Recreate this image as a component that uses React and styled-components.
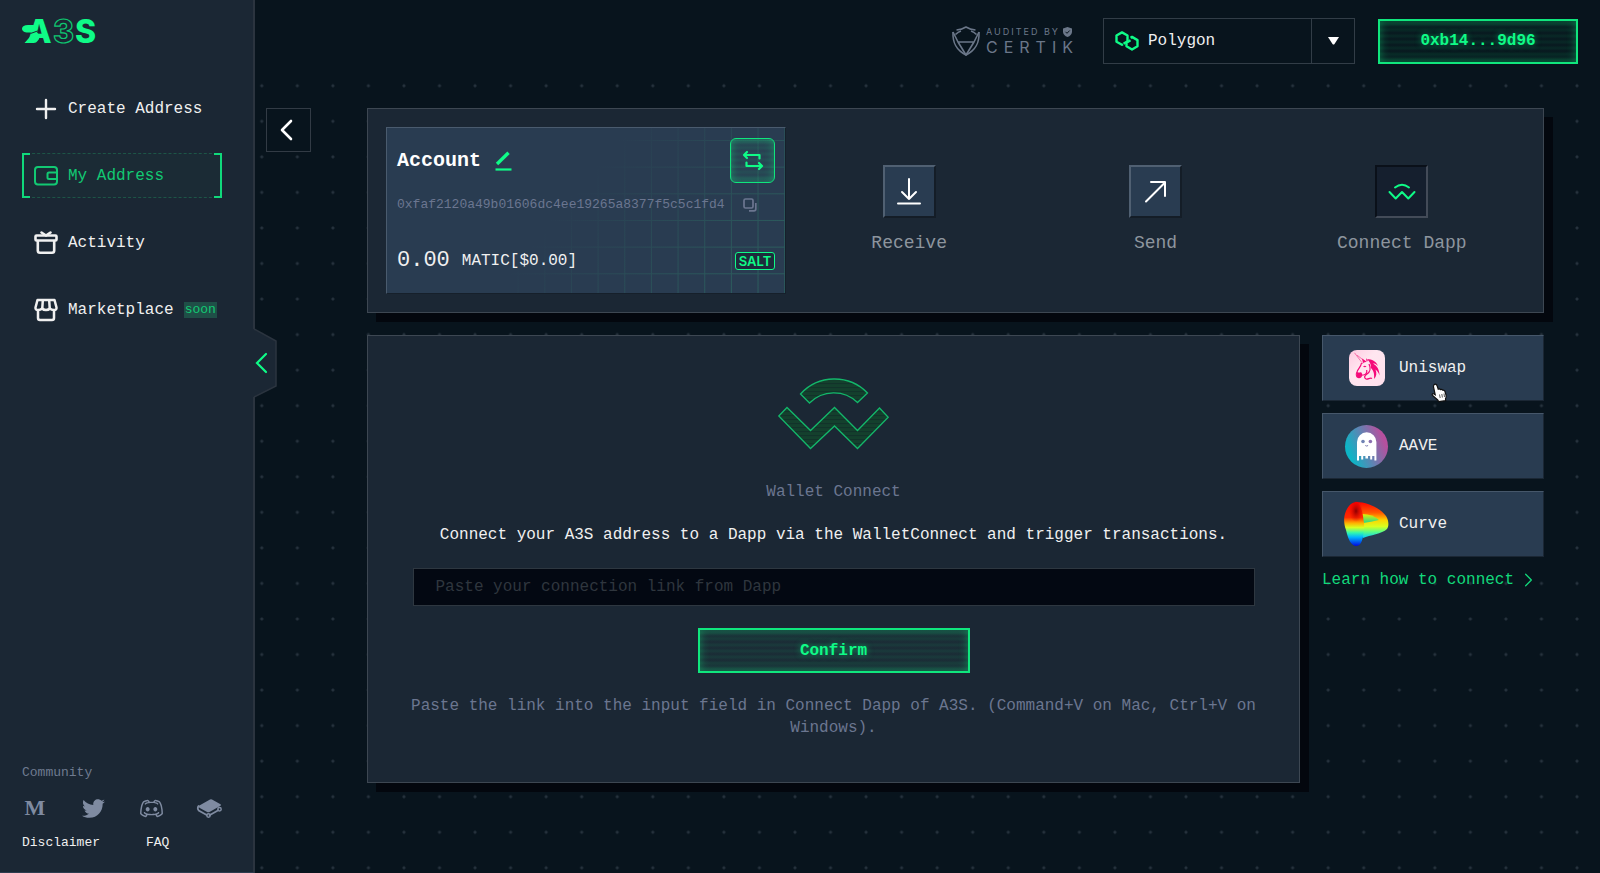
import React, { useState } from "react";
import styled, { createGlobalStyle, css } from "styled-components";
import { FaTwitter } from "react-icons/fa";
import { RxDiscordLogo } from "react-icons/rx";

const GlobalStyle = createGlobalStyle`
  * {
    box-sizing: border-box;
  }
  body {
    margin: 0;
    background-color: #08141d;
    color: #f0f0f0;
    font-family: "Liberation Mono", "Courier New", monospace;
    font-size: 16px;
    line-height: 22px;
  }
  a {
    color: inherit;
    text-decoration: none;
  }
  button,
  input,
  select {
    font: inherit;
  }
  svg {
    display: block;
    flex: none;
    overflow: visible;
  }
`;

const PlusIcon = () => (
  <svg width="24" height="24" viewBox="0 0 24 24" fill="none" stroke="currentColor" strokeWidth="2.4" strokeLinecap="round">
    <path d="M12 3v18M3 12h18" />
  </svg>
);

const WalletIcon = () => (
  <svg width="24" height="24" viewBox="0 0 24 24" fill="none" stroke="currentColor" strokeWidth="2">
    <rect x="1" y="3" width="22" height="17.5" rx="3" />
    <path d="M23 8.500h-8q-1.500 0-1.500 1.500v3.500q0 1.500 1.500 1.500h8" />
  </svg>
);

const GiftIcon = () => (
  <svg width="24" height="24" viewBox="0 0 24 24" fill="none" stroke="currentColor" strokeWidth="2.600" strokeLinecap="round" strokeLinejoin="round">
    <rect x="1.500" y="4.500" width="21" height="5" rx="1" />
    <path d="M3.800 10v9.500q0 2.200 2.200 2.200h12q2.200 0 2.200-2.200V10M7.500 1.500l4.500 3 4.500-3" />
  </svg>
);

const StoreIcon = () => (
  <svg width="24" height="24" viewBox="0 0 24 24" fill="none" stroke="currentColor" strokeWidth="2.500" strokeLinecap="round" strokeLinejoin="round">
    <path d="M3.500 2h17l2 7.500q.3 2.500-2.500 2.500t-4-1.500q-1.600 1.500-4 1.500t-4-1.500Q6.800 12 4 12T1.500 9.500z" />
    <path d="M8.800 2.500L8.300 10M15.200 2.500l.5 7.500" />
    <path d="M4 12.500V20q0 2 2 2h12q2 0 2-2v-7.500" />
  </svg>
);

const GitBookIcon = () => (
  <svg width="25" height="19" viewBox="0 0 25 19">
    <path d="M1.500 7L13 .5q1-.5 2 0l8.500 4.700q1 .8 0 1.500L12.500 13q-1.200.6-2.400 0L2.800 9q-1.500-.8-1.300-2z" fill="currentColor" />
    <path
      d="M1.500 7q-1.600 2.200.2 4.500l8 4.500M12.500 16.200l8.800-5"
      fill="none"
      stroke="currentColor"
      strokeWidth="1.700"
      strokeLinecap="round"
    />
    <circle cx="11.500" cy="16.500" r="1.700" fill="none" stroke="currentColor" strokeWidth="1.500" />
    <circle cx="22.500" cy="10.300" r="1.700" fill="none" stroke="currentColor" strokeWidth="1.500" />
  </svg>
);

const Chevron = ({ width = 13, height = 22, flip, stroke = 2.6 }) => (
  <svg width={width} height={height} viewBox="0 0 13 22" fill="none" stroke="currentColor" strokeWidth={stroke} strokeLinecap="round" strokeLinejoin="round">
    <path d={flip ? "M2 2l9 9-9 9" : "M11 2l-9 9 9 9"} />
  </svg>
);

const BrandLogo = () => (
  <svg width="76" height="26" viewBox="0 0 76 26" role="img" aria-label="A3S">
    <g fontFamily="Inter, sans-serif" fontWeight="800" fontSize="32">
      <text x="5" y="24" fill="#0ffb87">A</text>
      <text x="31" y="24" fill="#1b2734" stroke="#0ec771" strokeWidth="1.200">3</text>
      <text x="53" y="24" fill="#0ffb87">S</text>
    </g>
    <path d="M6 6h10l-1 5-6 2.500H4.500C-2 12.500-1.500 6 6 6z" fill="#0ffb87" />
    <path d="M10 15.500q4-4 6.500-.5t-1 7q-1 2-4 2H2.500z" fill="#0ffb87" />
    <path d="M8.500 14.500l7-2.500" stroke="#1b2734" strokeWidth="1" />
  </svg>
);

const CertikShield = () => (
  <svg width="28" height="30" viewBox="0 0 28 30" fill="none" stroke="currentColor" strokeWidth="1.600" strokeLinejoin="round">
    <path d="M4.500 4Q10 3.500 14 1q4 2.500 9.500 3M1 6C.5 17 4 24 14 29 24 24 27.500 17 27 6" />
    <path d="M1 6l5 10 8 13 8-13 5-10M6 16h16M3.500 8.500Q6 6 9 5M24.500 8.500Q22 6 19 5" />
  </svg>
);

const PolygonIcon = () => (
  <svg width="24" height="20" viewBox="0 0 24 20" fill="none" stroke="#0ffb87" strokeWidth="2.400" strokeLinejoin="round">
    <path d="M8 13.200l-1 .6-5.500-3.100V4.500L7 1.400l5.500 3.100v2.300M12.500 6.800v3.500L8.500 12.700" />
    <path d="M15.500 6.700l1.500-.8 5.500 3.200v6.200L17 18.500l-5.500-3.200v-3.600l4-2.400" />
  </svg>
);

const EditIcon = () => (
  <svg width="17" height="20" viewBox="0 0 17 20" fill="none" stroke="#0ffb87">
    <path d="M2 13L13.500 1.800" strokeWidth="3.400" strokeLinejoin="round" />
    <path d="M.5 18.500h16" strokeWidth="2.200" />
  </svg>
);

const SwapIcon = () => (
  <svg width="22" height="22" viewBox="0 0 22 22" fill="none" stroke="currentColor" strokeWidth="2.200" strokeLinecap="round" strokeLinejoin="round">
    <path d="M5 2L2 5l3 3M2.500 5H17.500v3.500" />
    <path d="M17 13l3 3-3 3M19.500 16H4.500v-3.500" />
  </svg>
);

const CopyIcon = () => (
  <svg width="14" height="14" viewBox="0 0 14 14" fill="none" stroke="currentColor" strokeWidth="1.700" strokeLinejoin="round">
    <rect x="1" y="1" width="9" height="9" rx="1.500" />
    <path d="M12.800 5v6q0 1.800-1.800 1.800H6" />
  </svg>
);

const ReceiveIcon = () => (
  <svg width="26" height="28" viewBox="0 0 26 28" fill="none" stroke="currentColor" strokeWidth="2" strokeLinecap="round" strokeLinejoin="round">
    <path d="M13 1v20M6 14l7 7 7-7M2 25.500h22" />
  </svg>
);

const SendIcon = () => (
  <svg width="26" height="28" viewBox="0 0 26 28" fill="none" stroke="currentColor" strokeWidth="2" strokeLinecap="round" strokeLinejoin="round">
    <path d="M4 23.500L23 4.500M9 4h14v14" />
  </svg>
);

const ConnectIcon = () => (
  <svg width="28" height="28" viewBox="0 0 28 28" fill="none" stroke="#0ffb87" strokeWidth="2" strokeLinecap="round" strokeLinejoin="round">
    <path d="M7 9.500q7-5.500 14 0M1.500 14l6.200 6.500L14 14l6.300 6.500L26.500 14" />
  </svg>
);

const WalletConnectMark = () => (
  <svg width="111" height="71" viewBox="0 0 111 71">
    <defs>
      <pattern id="scan" width="4" height="4" patternUnits="userSpaceOnUse">
        <rect width="4" height="4" fill="#14402d" />
        <rect width="4" height="1.200" fill="#12332a" />
      </pattern>
    </defs>
    <g fill="url(#scan)" stroke="#13b76a" strokeWidth="1.300">
      <path d="M22.500 15A46 46 0 0 1 89.500 14L79.500 23.500A34 34 0 0 0 31.500 24z" />
      <path d="M.8 37L9 28.500l23.500 23L56.500 28.500l23 23L101.500 29l8.700 9.300L79.500 69.500 56.500 47l-24 22.500z" />
    </g>
  </svg>
);

const UniswapLogo = () => (
  <svg width="36" height="36" viewBox="0 0 36 36">
    <defs>
      <linearGradient id="uni" x1="0" y1="0" x2="1" y2="1">
        <stop offset="0" stopColor="#ffc9e0" />
        <stop offset="0.400" stopColor="#ffe6f0" />
        <stop offset="1" stopColor="#ffe0ec" />
      </linearGradient>
    </defs>
    <rect width="36" height="36" rx="8" fill="url(#uni)" />
    <path d="M5.500 2.800L14 14M8 5.200L17 12" stroke="#f5458f" strokeWidth="0.700" />
    <path d="M13 8.500l4.500 3-3.500 1.500zM17 8l2 3-1.500.5z" fill="#f50b7a" />
    <path d="M12.500 13C12 17 9 18.500 8 22c-1 1.500-.8 4 .2 5 1.500 1 3 .5 4-.5-.5-1 0-1.500 2-1.500 3-.2 4-2.500 3.500-5" fill="none" stroke="#f50b7a" strokeWidth="1.200" />
    <path d="M8 22c1.500.5 3 1 4 0l1.500 2.500-2 2.500c-2.500 1-4 0-4-2.500z" fill="#f50b7a" />
    <path d="M14 16.500q1.800-1.500 3.500 0-1.500 1.600-3.500 0z" fill="#f50b7a" />
    <path d="M18 9c5 .3 9 2 11 7-2-2-3-2.500-5-2.500 4 2.200 6.500 6 6.500 12-1-3-2-4.500-4-6 1.500 4 1 7-1.500 9.500.5-5-.2-8-3-11 .2-4-1.500-6.500-4-9z" fill="#f50b7a" />
    <path d="M20 14c2 4 1 8-2 10s-3 4-1 5 4-2 6-.5" fill="none" stroke="#f50b7a" strokeWidth="1.300" />
  </svg>
);

const AaveLogo = () => (
  <svg width="43" height="43" viewBox="0 0 43 43">
    <defs>
      <linearGradient id="aave" x1="0" y1="0.700" x2="1" y2="0.300">
        <stop offset="0.100" stopColor="#0db5c6" />
        <stop offset="0.900" stopColor="#b6509e" />
      </linearGradient>
    </defs>
    <circle cx="21.500" cy="21.500" r="21.500" fill="url(#aave)" />
    <path d="M12 35.500V17a9.700 9.700 0 0 1 19.400 0v18.500h-2V31h-2.200v3.500h-2V31H23v2.500h-2.600V31h-2.200v3.500h-2V31H14v4.500z" fill="#fff" />
    <circle cx="18" cy="16.500" r="1.800" fill="#7083b4" />
    <circle cx="25.400" cy="16.500" r="1.800" fill="#8a70b0" />
    <path d="M20.300 20.500q1.400 1.100 2.800 0" fill="none" stroke="#7a78b0" />
  </svg>
);

const CurveLogo = () => (
  <svg width="45" height="44" viewBox="0 0 45 44">
    <defs>
      <linearGradient id="curveLeft" x1="0" y1="0" x2="0" y2="1">
        <stop offset="0" stopColor="#f00" />
        <stop offset="0.350" stopColor="#ff2a00" />
        <stop offset="0.480" stopColor="#ffb000" />
        <stop offset="0.580" stopColor="#d8ff20" />
        <stop offset="0.700" stopColor="#30f8b0" />
        <stop offset="0.800" stopColor="#00b4ff" />
        <stop offset="1" stopColor="#0008e0" />
      </linearGradient>
      <linearGradient id="curveRight" x1="0" y1="0" x2="0" y2="1">
        <stop offset="0" stopColor="#f00" />
        <stop offset="0.300" stopColor="#ff5a00" />
        <stop offset="0.500" stopColor="#ffd400" />
        <stop offset="0.680" stopColor="#d8ff20" />
        <stop offset="0.820" stopColor="#60ff80" />
        <stop offset="1" stopColor="#00d0ff" />
      </linearGradient>
      <linearGradient id="curveHole" x1="0" y1="0" x2="0" y2="1">
        <stop offset="0" stopColor="#e8f000" />
        <stop offset="1" stopColor="#1fd890" />
      </linearGradient>
      <radialGradient id="curveDark">
        <stop offset="0" stopColor="#8a0000" />
        <stop offset="1" stopColor="#e00000" stopOpacity="0" />
      </radialGradient>
    </defs>
    <path d="M12 0C24 0 37 7 42 14c3 5 3 10 1 13-5 5-17 6-24 9L12 20z" fill="url(#curveRight)" />
    <path d="M18 12q11 0 17 6-8 2-16 3z" fill="url(#curveHole)" />
    <path d="M2 9C5 2 9 0 13 0c4 3 6 12 6.500 18 1 3 .5 7 .5 10-1 7-2 16-7.500 16S4 37 2 28C-.5 21-.5 15 2 9z" fill="url(#curveLeft)" />
    <ellipse cx="12" cy="9" rx="7" ry="11" fill="url(#curveDark)" />
  </svg>
);

const HandPointer = () => (
  <svg width="17" height="19" viewBox="0 0 17 19">
    <path
      d="M3 1.800C4.500.5 5.800 1.500 6.200 3l1 3.200q1.500-.8 2.300.4 1.500-.6 2.200.6 1.700-.3 2.200 1.100l1.200 4q.3 2-.6 3.500l.2 1.900-7 .8-1-1.500-4.800-4.300C.3 11.500 1.500 10 3 11l1.200.8L2.500 4Q2.300 2.500 3 1.800z"
      fill="#fff"
      stroke="#101010"
      strokeWidth="1.200"
    />
    <path d="M8.500 11.500l.7 3.500M10.800 11l.6 3.500M13 10.500l.5 3.500" stroke="#333" strokeWidth="0.800" />
  </svg>
);

const navItems = [
  { label: "Create Address", icon: <PlusIcon /> },
  { label: "My Address", icon: <WalletIcon />, active: true },
  { label: "Activity", icon: <GiftIcon /> },
  { label: "Marketplace", icon: <StoreIcon />, soon: true },
];

const actions = [
  { label: "Receive", icon: <ReceiveIcon /> },
  { label: "Send", icon: <SendIcon /> },
  { label: "Connect Dapp", icon: <ConnectIcon />, pressed: true },
];

const dapps = [
  { label: "Uniswap", icon: <UniswapLogo />, hovered: true },
  { label: "AAVE", icon: <AaveLogo /> },
  { label: "Curve", icon: <CurveLogo /> },
];

const SideBar = () => (
  <Aside>
    <a href="#home">
      <BrandLogo />
    </a>
    <Nav>
      {navItems.map(({ label, icon, active, soon }) => (
        <NavItem key={label} href="#" $active={active}>
          {icon}
          <span>{label}</span>
          {soon && <Soon>soon</Soon>}
        </NavItem>
      ))}
    </Nav>
    <Community>
      <CommunityTitle>Community</CommunityTitle>
      <Socials>
        <Social href="#" aria-label="Medium">
          <MediumMark>M</MediumMark>
        </Social>
        <Social href="#" aria-label="Twitter">
          <FaTwitter size={23} />
        </Social>
        <Social href="#" aria-label="Discord">
          <RxDiscordLogo size={23} />
        </Social>
        <Social href="#" aria-label="GitBook">
          <GitBookIcon />
        </Social>
      </Socials>
      <Legal>
        <a href="#disclaimer">Disclaimer</a>
        <a href="#faq">FAQ</a>
      </Legal>
    </Community>
    <Collapse aria-label="Collapse menu">
      <svg width="25" height="70" viewBox="0 0 25 70">
        <path d="M0 1h1l22 12v45L1 69H0z" fill="#1b2734" />
        <path d="M1 1l22 12v45L1 69" fill="none" stroke="#2b343f" strokeWidth="1.500" />
        <path d="M13 26l-9 9 9 9" fill="none" stroke="#0ffb87" strokeWidth="2.200" strokeLinecap="round" />
      </svg>
    </Collapse>
  </Aside>
);

const TopBar = () => (
  <Header>
    <Certik>
      <CertikShield />
      <div>
        <Audited>
          AUDITED BY
          <svg width="9" height="10" viewBox="0 0 9 10">
            <path d="M4.500 0L9 1.500V5Q8.500 8.500 4.500 10 .5 8.500 0 5V1.500z" fill="currentColor" />
            <path d="M2.500 4.800l1.500 1.500 2.700-2.800" fill="none" stroke="#08141d" />
          </svg>
        </Audited>
        <CertikName>CERTIK</CertikName>
      </div>
    </Certik>
    <Network>
      <PolygonIcon />
      <NetworkSelect aria-label="Network" defaultValue="Polygon">
        <option>Polygon</option>
      </NetworkSelect>
      <Caret>
        <svg width="11" height="8" viewBox="0 0 11 8">
          <path d="M0 0h11L6.500 7q-1 1-2 0z" fill="#fff" />
        </svg>
      </Caret>
    </Network>
    <AccountButton>0xb14...9d96</AccountButton>
  </Header>
);

const App = () => {
  const [link, setLink] = useState("");

  return (
    <>
      <GlobalStyle />
      <Page>
        <SideBar />
        <Main>
          <TopBar />
          <Content>
            <BackButton aria-label="Back">
              <Chevron />
            </BackButton>
            <Panels>
              <AccountPanel>
                <AccountCard>
                  <CardTop>
                    <h1>Account</h1>
                    <IconButton aria-label="Rename">
                      <EditIcon />
                    </IconButton>
                    <SwapButton aria-label="Switch account">
                      <SwapIcon />
                    </SwapButton>
                  </CardTop>
                  <AddressRow>
                    <span>0xfaf2120a49b01606dc4ee19265a8377f5c5c1fd4</span>
                    <IconButton aria-label="Copy address">
                      <CopyIcon />
                    </IconButton>
                  </AddressRow>
                  <Balance>
                    <Amount>0.00</Amount>
                    <span>MATIC[$0.00]</span>
                    <Salt>SALT</Salt>
                  </Balance>
                </AccountCard>
                <Actions>
                  {actions.map(({ label, icon, pressed }) => (
                    <Action key={label}>
                      <Tile $pressed={pressed}>{icon}</Tile>
                      {label}
                    </Action>
                  ))}
                </Actions>
              </AccountPanel>
              <Columns>
                <ConnectPanel>
                  <WalletConnectMark />
                  <PanelTitle>Wallet Connect</PanelTitle>
                  <Lead>Connect your A3S address to a Dapp via the WalletConnect and trigger transactions.</Lead>
                  <LinkInput
                    aria-label="Connection link"
                    placeholder="Paste your connection link from Dapp"
                    value={link}
                    onChange={(e) => setLink(e.target.value)}
                  />
                  <ConfirmButton>Confirm</ConfirmButton>
                  <Hint>
                    Paste the link into the input field in Connect Dapp of A3S. (Command+V on Mac, Ctrl+V on Windows).
                  </Hint>
                </ConnectPanel>
                <DappList>
                  {dapps.map(({ label, icon, hovered }) => (
                    <DappCard key={label} href="#">
                      <DappIcon>{icon}</DappIcon>
                      {label}
                      {hovered && (
                        <Pointer>
                          <HandPointer />
                        </Pointer>
                      )}
                    </DappCard>
                  ))}
                  <LearnLink href="#learn">
                    Learn how to connect
                    <Chevron width={9} height={14} stroke={2} flip />
                  </LearnLink>
                </DappList>
              </Columns>
            </Panels>
          </Content>
        </Main>
      </Page>
    </>
  );
};

const Page = styled.div`
  display: flex;
  min-height: 100vh;
`;

const Aside = styled.aside`
  position: relative;
  display: flex;
  flex-direction: column;
  flex: none;
  width: 255px;
  padding: 19px 31px 18px 22px;
  background-color: #1b2734;
  border-right: 2px solid #2b343f;
  border-bottom: 1px solid #2d3c4f;
`;

const Nav = styled.nav`
  display: flex;
  flex-direction: column;
  gap: 22px;
  margin-top: 41px;
`;

const NavItem = styled.a`
  position: relative;
  display: flex;
  align-items: center;
  gap: 10px;
  height: 45px;
  padding-left: 12px;

  ${({ $active }) =>
    $active &&
    css`
      color: #12c973;
      background-color: #1b2b35;
      border-top: 1px dashed #1d5547;
      border-bottom: 1px dashed #1d5547;

      &::before,
      &::after {
        content: "";
        position: absolute;
        top: -1px;
        bottom: -1px;
        width: 6px;
        border: 2px solid #10d97b;
      }
      &::before {
        left: 0;
        border-right: none;
      }
      &::after {
        right: 0;
        border-left: none;
      }
    `}
`;

const Soon = styled.span`
  padding: 0 1px;
  font-size: 13px;
  line-height: 16px;
  color: #12c973;
  background-color: #1f4f47;
`;

const Community = styled.div`
  margin-top: auto;
  font-size: 13px;
`;

const CommunityTitle = styled.div`
  color: #6f7b90;
`;

const Socials = styled.div`
  display: flex;
  gap: 32px;
  margin: 12px 0;
  color: #7f8ba1;
`;

const Social = styled.a`
  display: flex;
  align-items: center;
  justify-content: center;
  width: 26px;
  height: 24px;
`;

const MediumMark = styled.span`
  font-family: "Liberation Serif", serif;
  font-size: 22px;
  font-weight: 700;
`;

const Legal = styled.div`
  display: flex;
  gap: 46px;
`;

const Collapse = styled.button`
  position: absolute;
  top: 328px;
  left: 253px;
  padding: 0;
  background: none;
  border: none;
  cursor: pointer;
`;

const Main = styled.main`
  flex: 1;
  min-width: 0;
  background-image: radial-gradient(circle, #26323d 1px, transparent 2px);
  background-size: calc(100vw / 45) calc(100vw / 45);
  background-position: -11px 68px;
`;

const Header = styled.header`
  display: flex;
  align-items: center;
  justify-content: flex-end;
  height: 82px;
  padding-right: 22px;
  background-color: #08141d;
`;

const Certik = styled.div`
  display: flex;
  align-items: center;
  gap: 6px;
  margin-right: 24px;
  color: #6b7789;
  font-family: Inter, sans-serif;
`;

const Audited = styled.div`
  display: flex;
  align-items: center;
  gap: 3px;
  font-size: 9px;
  line-height: 12px;
  letter-spacing: 2px;
`;

const CertikName = styled.div`
  font-size: 16px;
  font-weight: 400;
  line-height: 18px;
  letter-spacing: 6px;
`;

const Network = styled.div`
  position: relative;
  display: flex;
  align-items: center;
  width: 252px;
  height: 46px;
  margin-right: 23px;
  padding-left: 11px;
  border: 1px solid #323d47;
`;

const NetworkSelect = styled.select`
  flex: 1;
  height: 44px;
  padding: 0 9px;
  color: #f0f0f0;
  background: none;
  border: none;
  appearance: none;
`;

const Caret = styled.span`
  display: flex;
  align-items: center;
  justify-content: center;
  width: 43px;
  height: 44px;
  border-left: 1px solid #323d47;
  pointer-events: none;
`;

const neon = css`
  color: #0ffb87;
  background: repeating-linear-gradient(
    rgba(15, 251, 135, 0.02) 0,
    rgba(15, 251, 135, 0.09) 3px,
    rgba(15, 251, 135, 0.02) 6px
  );
  box-shadow: inset 0 0 10px rgba(15, 251, 135, 0.4);
  cursor: pointer;
`;

const NeonButton = styled.button`
  ${neon}
  height: 45px;
  padding: 0;
  font-weight: 700;
  text-shadow: 0 0 6px rgba(15, 251, 135, 0.5);
  border: 2px solid #10e67d;
`;

const AccountButton = styled(NeonButton)`
  width: 200px;
`;

const ConfirmButton = styled(NeonButton)`
  width: 272px;
  margin: 22px 0;
`;

const Content = styled.div`
  display: flex;
  align-items: flex-start;
  gap: 56px;
  padding: 26px 56px 26px 11px;
`;

const BackButton = styled.button`
  display: flex;
  align-items: center;
  justify-content: center;
  flex: none;
  width: 45px;
  height: 44px;
  padding: 0 4px 0 0;
  color: #fff;
  background-color: #08141d;
  border: 1px solid #323b45;
`;

const Panels = styled.div`
  display: flex;
  flex-direction: column;
  flex: 1;
  gap: 22px;
  min-width: 0;
`;

const Panel = styled.section`
  background-color: #1b2734;
  border: 1px solid #3d4752;
  box-shadow: 9px 9px 0 #03070e;
`;

const AccountPanel = styled(Panel)`
  display: flex;
  padding: 18px;
`;

const AccountCard = styled.div`
  width: 400px;
  padding: 10px 10px 18px;
  background: linear-gradient(130deg, #293c51 45%, rgba(41, 60, 81, 0.2) 90%),
    linear-gradient(90deg, #2c6460 1px, transparent 1px) 24px 0 / calc(100vw / 60) calc(100vw / 60),
    linear-gradient(#2c6460 1px, transparent 1px) 0 12px / calc(100vw / 60) calc(100vw / 60),
    #293c51;
  border: 1px solid #4a5b6e;
  border-right-color: #16202b;
  border-bottom-color: #16202b;
`;

const CardTop = styled.div`
  display: flex;
  align-items: center;

  h1 {
    margin: 0 14px 0 0;
    font-size: 20px;
    line-height: 24px;
    color: #fff;
  }
`;

const IconButton = styled.button`
  display: flex;
  padding: 0;
  color: inherit;
  background: none;
  border: none;
  cursor: pointer;
`;

const SwapButton = styled.button`
  ${neon}
  display: flex;
  align-items: center;
  justify-content: center;
  width: 45px;
  height: 45px;
  margin-left: auto;
  border: 1px solid #10e67d;
  border-radius: 6px;
`;

const AddressRow = styled.div`
  display: flex;
  align-items: center;
  gap: 18px;
  margin-top: 11px;
  color: #6b7690;
  font-size: 13px;
`;

const Balance = styled.div`
  display: flex;
  align-items: center;
  gap: 12px;
  margin-top: 31px;
`;

const Amount = styled.span`
  font-size: 22px;
  line-height: 28px;
`;

const Salt = styled.span`
  width: 40px;
  margin-left: auto;
  color: #0ffb87;
  background-color: #1d2c3c;
  border: 1px solid #0ffb87;
  border-radius: 3px;
  font-family: Inter, sans-serif;
  font-size: 13px;
  font-weight: 600;
  line-height: 16px;
  text-align: center;
`;

const Actions = styled.div`
  display: grid;
  grid-template-columns: repeat(3, 1fr);
  flex: 1;
  padding-top: 38px;
`;

const Action = styled.button`
  display: flex;
  flex-direction: column;
  align-items: center;
  align-self: start;
  gap: 14px;
  padding: 0;
  color: #8d959e;
  background: none;
  border: none;
  font-size: 18px;
  cursor: pointer;
`;

const Tile = styled.span`
  display: flex;
  align-items: center;
  justify-content: center;
  width: 53px;
  height: 53px;
  color: #fff;
  background-color: ${({ $pressed }) => ($pressed ? "#151f2e" : "#293c51")};
  border: 2px solid;
  border-color: ${({ $pressed }) => ($pressed ? "#0a1019 #434b58 #434b58 #0a1019" : "#506072 #141d27 #141d27 #506072")};
`;

const Columns = styled.div`
  display: flex;
  align-items: flex-start;
  gap: 22px;
`;

const ConnectPanel = styled(Panel)`
  display: flex;
  flex-direction: column;
  align-items: center;
  flex: 1;
  padding: 43px 24px;
  text-align: center;
`;

const PanelTitle = styled.h2`
  margin: 31px 0 21px;
  color: #6b7690;
  font-size: 16px;
  font-weight: 400;
`;

const Lead = styled.p`
  margin: 0 0 22px;
`;

const LinkInput = styled.input`
  width: 842px;
  max-width: 100%;
  height: 38px;
  padding: 0 22px;
  color: #f0f0f0;
  background-color: #030812;
  border: 1px solid #2e3740;

  &::placeholder {
    color: #2f363e;
    opacity: 1;
  }
`;

const Hint = styled.p`
  margin: 0;
  color: #6b7690;
`;

const DappList = styled.div`
  display: flex;
  flex-direction: column;
  gap: 12px;
  width: 222px;
`;

const DappCard = styled.a`
  position: relative;
  display: flex;
  align-items: center;
  gap: 10px;
  height: 66px;
  padding-left: 21px;
  background-color: #293c51;
  border: 1px solid #46576a;
  border-right-color: #1b2734;
  border-bottom-color: #1b2734;
`;

const DappIcon = styled.span`
  display: flex;
  justify-content: center;
  width: 45px;
`;

const Pointer = styled.span`
  position: absolute;
  top: 47px;
  left: 108px;
`;

const LearnLink = styled.a`
  display: flex;
  align-items: center;
  gap: 10px;
  color: #12d97b;
`;

export default App;
